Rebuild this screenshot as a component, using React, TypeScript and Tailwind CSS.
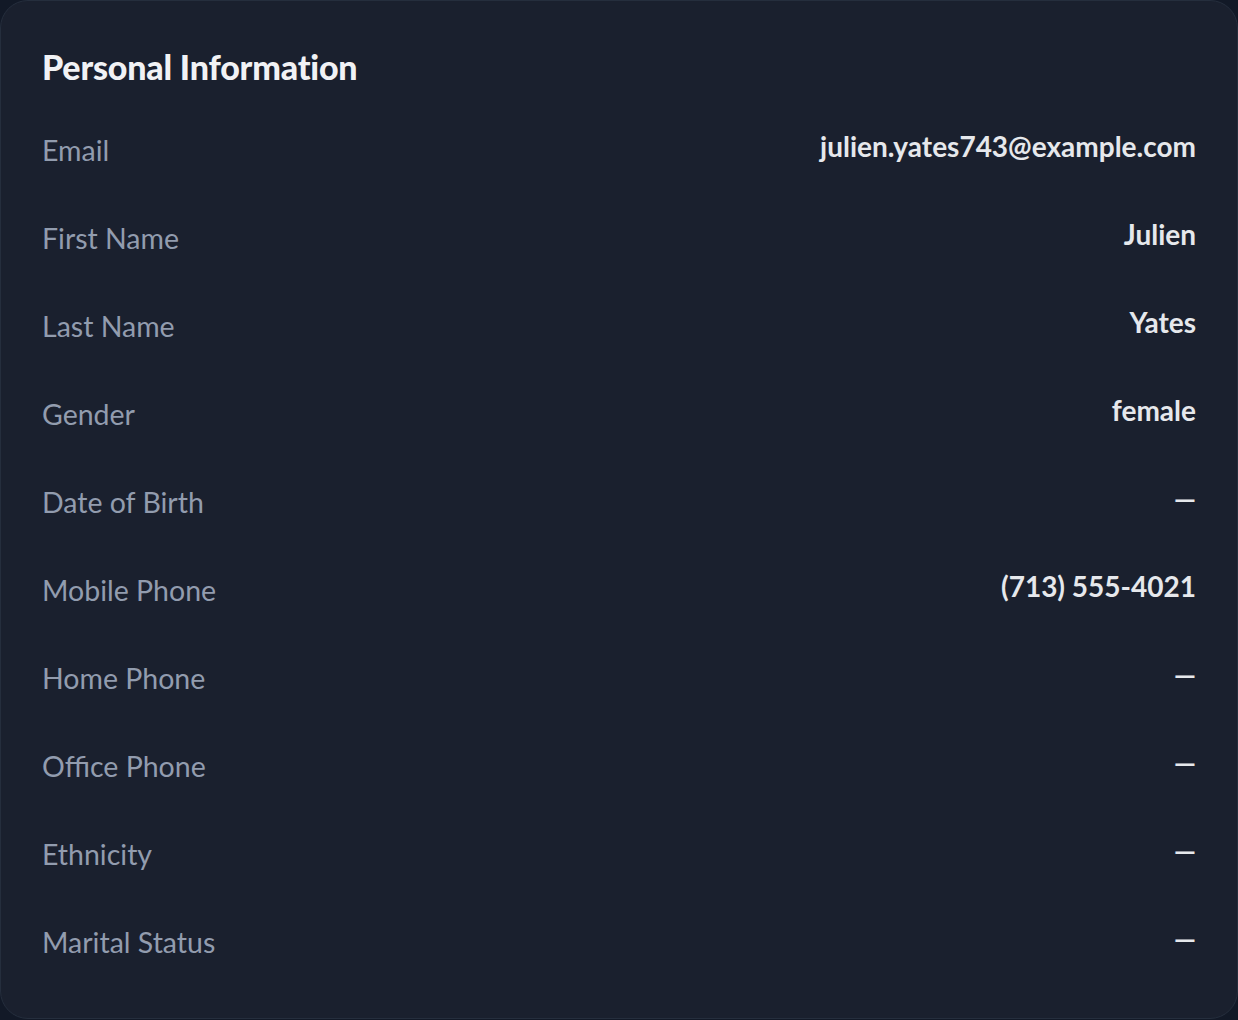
import React from 'react';

const PersonalInformation: React.FC = () => {
  const fields = [
    { label: "Email", value: "julien.yates743@example.com" },
    { label: "First Name", value: "Julien" },
    { label: "Last Name", value: "Yates" },
    { label: "Gender", value: "female" },
    { label: "Date of Birth", value: "—" },
    { label: "Mobile Phone", value: "(713) 555-4021" },
    { label: "Home Phone", value: "—" },
    { label: "Office Phone", value: "—" },
    { label: "Ethnicity", value: "—" },
    { label: "Marital Status", value: "—" }
  ];

  return (
    <div className="min-h-screen bg-[#121927] font-['Lato',sans-serif]">
      <div className="h-[1019px] rounded-[28px] border border-[#252e3d] bg-[#1a202e] px-[41px] pt-[44px] pb-[32px]">
        <h2 className="text-[34px] leading-[44px] font-black tracking-[-0.2px] text-[#f1f2f5]">
          Personal Information
        </h2>

        <div className="mt-[17px] flex flex-col">
          {fields.map((field) => (
            <div key={field.label} className="flex h-[88px] items-center justify-between">
              <span className="text-[28.5px] text-[#929cae]">{field.label}</span>
              <span className="pb-2 text-[28px] font-bold text-[#e6e8ec]">{field.value}</span>
            </div>
          ))}
        </div>
      </div>
    </div>
  );
};

export default PersonalInformation;
